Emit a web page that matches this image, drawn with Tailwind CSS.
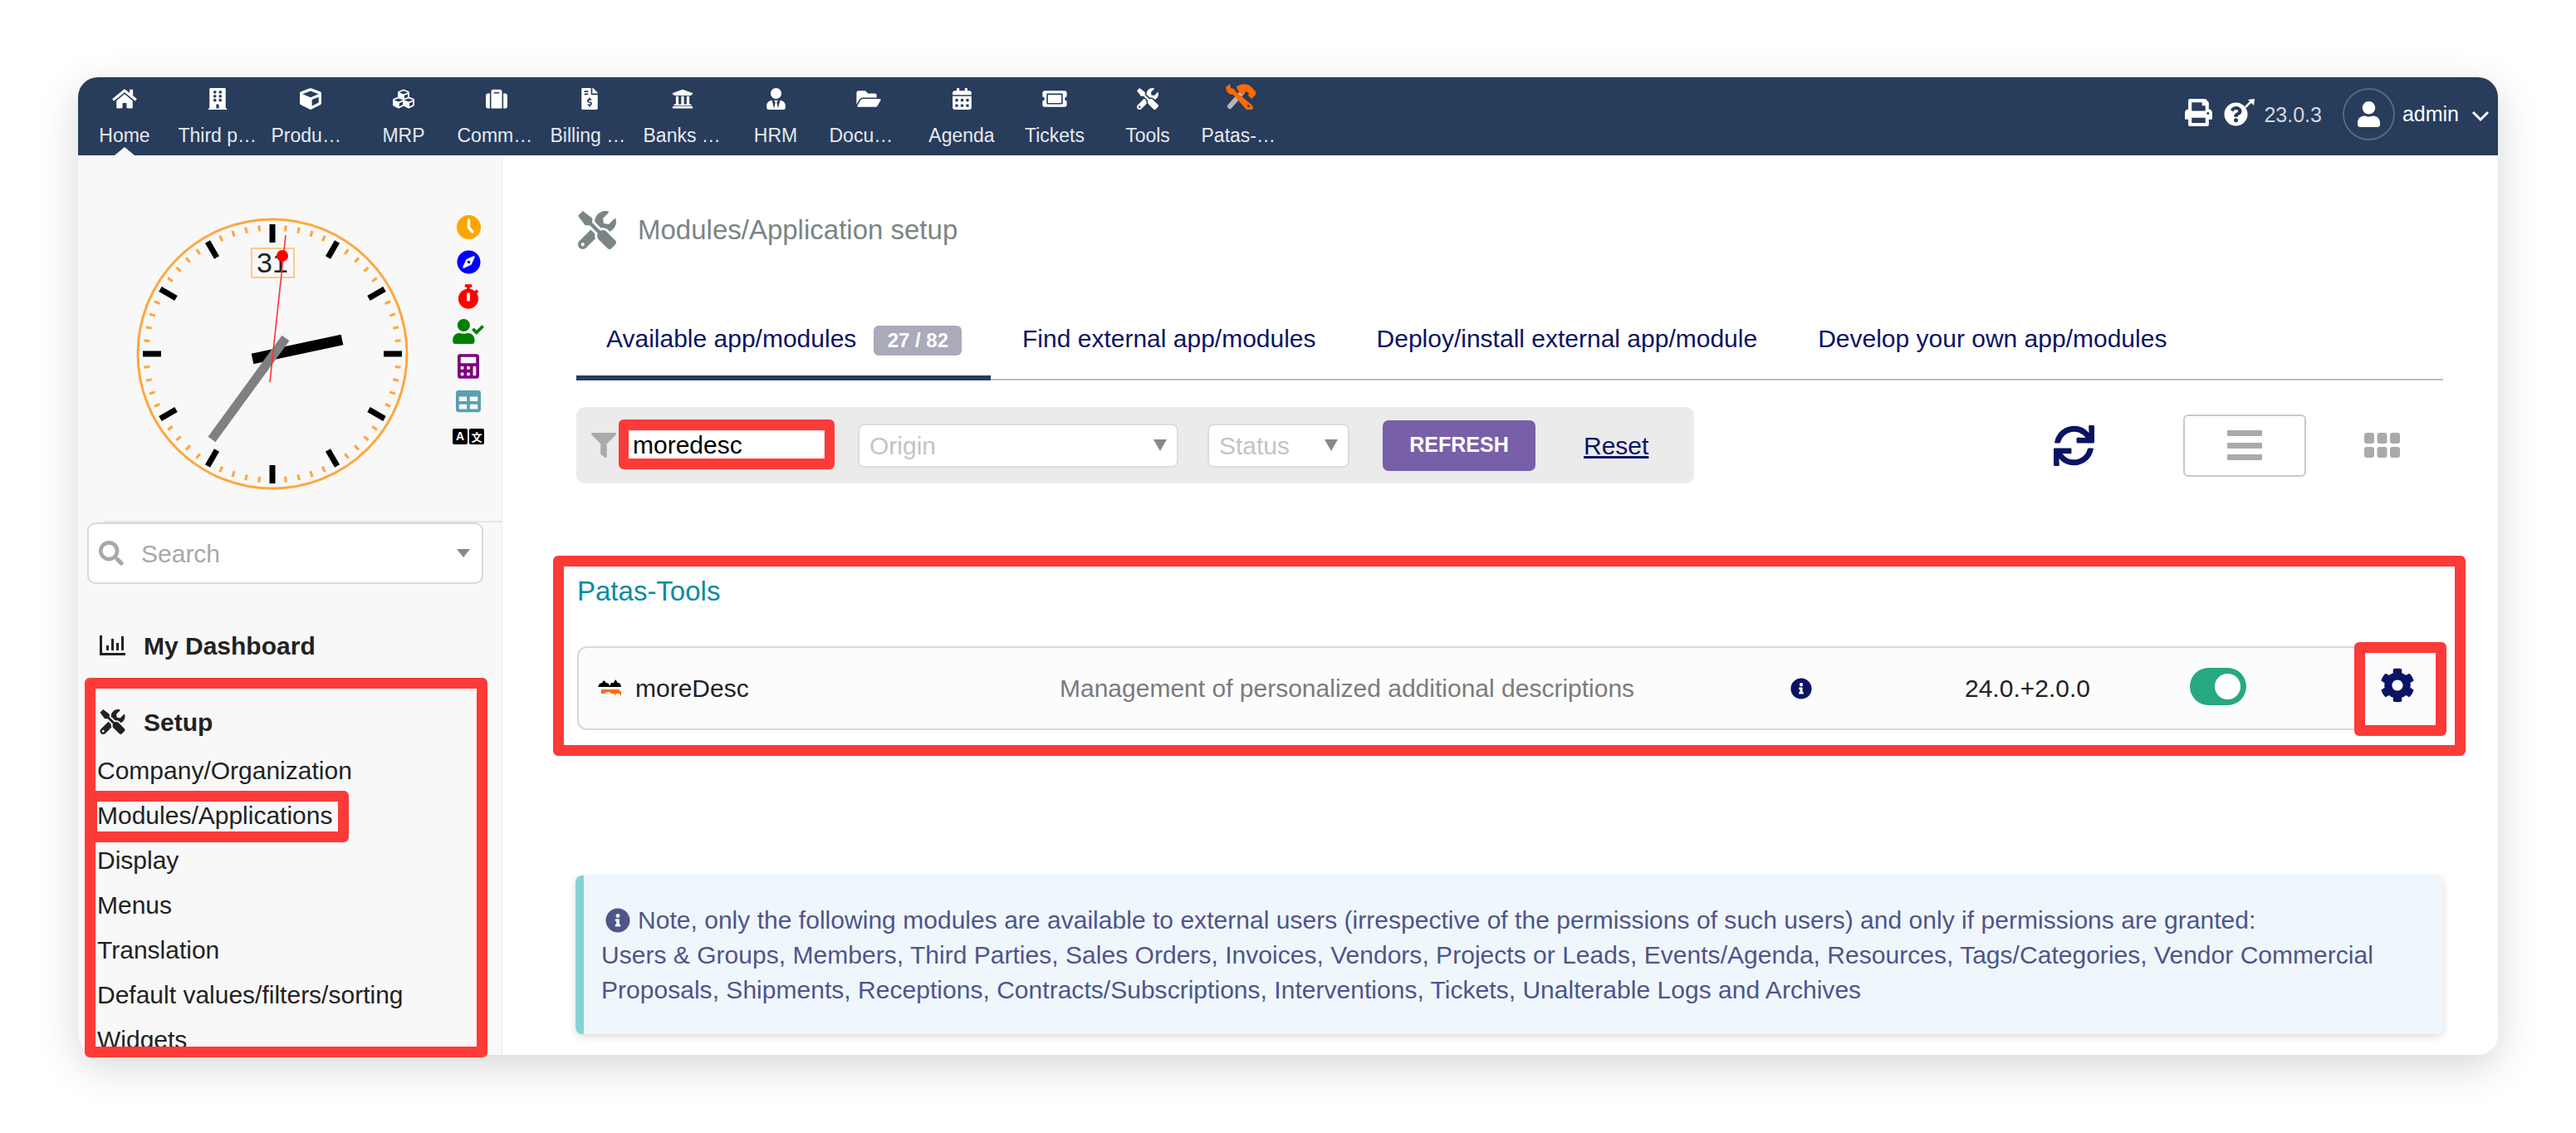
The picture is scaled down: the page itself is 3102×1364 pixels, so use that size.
<!DOCTYPE html>
<html lang="en">
<head>
<meta charset="utf-8">
<title>Modules/Application setup</title>
<script src="https://cdn.jsdelivr.net/npm/@tailwindcss/browser@4"></script>
</head>
<body class="bg-white">
<div class="relative w-[3102px] h-[1364px] overflow-hidden pt-[93px] pl-[94px] font-['Liberation_Sans',Arial,sans-serif] text-[30px] text-[#222]">

  <!-- window -->
  <div class="w-[2914px] h-[1177px] rounded-[24px] overflow-hidden bg-white shadow-[0_14px_50px_rgba(0,0,0,0.16)] flex flex-col">

    <!-- top bar -->
    <header class="h-[94px] shrink-0 bg-[#283c5c] flex text-[#e6e9ef] text-[23px]">
      <nav class="flex">
        <a class="relative w-[112px] flex flex-col items-center pt-[13px]">
          <svg class="h-[26px] w-[30px]" viewBox="0 0 576 512" fill="#fff"><path d="M280.37 148.26L96 300.11V464a16 16 0 0 0 16 16l112.06-.29a16 16 0 0 0 15.92-16V368a16 16 0 0 1 16-16h64a16 16 0 0 1 16 16v95.64a16 16 0 0 0 16 16.05L464 480a16 16 0 0 0 16-16V300L295.67 148.26a12.19 12.19 0 0 0-15.3 0zM571.6 251.47L488 182.56V44.05a12 12 0 0 0-12-12h-56a12 12 0 0 0-12 12v72.61L318.47 43a48 48 0 0 0-61 0L4.34 251.47a12 12 0 0 0-1.6 16.9l25.5 31A12 12 0 0 0 45.15 301l235.22-193.74a12.19 12.19 0 0 1 15.3 0L530.9 301a12 12 0 0 0 16.9-1.6l25.5-31a12 12 0 0 0-1.7-16.93z"/></svg>
          <span class="mt-[17px] w-[95px] truncate text-center leading-[28px]">Home</span>
          <span class="absolute bottom-0 left-[44px] w-0 h-0 border-x-[12px] border-x-transparent border-b-[10px] border-b-[#f8f8f8]"></span>
        </a>
        <a class="w-[112px] flex flex-col items-center pt-[13px]">
          <svg class="h-[26px] w-[24px]" viewBox="0 0 448 512" fill="#fff"><path d="M436 480h-20V24c0-13.255-10.745-24-24-24H56C42.745 0 32 10.745 32 24v456H12c-6.627 0-12 5.373-12 12v20h448v-20c0-6.627-5.373-12-12-12zM128 76c0-6.627 5.373-12 12-12h40c6.627 0 12 5.373 12 12v40c0 6.627-5.373 12-12 12h-40c-6.627 0-12-5.373-12-12V76zm0 96c0-6.627 5.373-12 12-12h40c6.627 0 12 5.373 12 12v40c0 6.627-5.373 12-12 12h-40c-6.627 0-12-5.373-12-12v-40zm52 148h-40c-6.627 0-12-5.373-12-12v-40c0-6.627 5.373-12 12-12h40c6.627 0 12 5.373 12 12v40c0 6.627-5.373 12-12 12zm76 160h-64v-84c0-6.627 5.373-12 12-12h40c6.627 0 12 5.373 12 12v84zm64-172c0 6.627-5.373 12-12 12h-40c-6.627 0-12-5.373-12-12v-40c0-6.627 5.373-12 12-12h40c6.627 0 12 5.373 12 12v40zm0-96c0 6.627-5.373 12-12 12h-40c-6.627 0-12-5.373-12-12v-40c0-6.627 5.373-12 12-12h40c6.627 0 12 5.373 12 12v40zm0-96c0 6.627-5.373 12-12 12h-40c-6.627 0-12-5.373-12-12V76c0-6.627 5.373-12 12-12h40c6.627 0 12 5.373 12 12v40z"/></svg>
          <span class="mt-[17px] w-[95px] truncate text-center leading-[28px]">Third parties</span>
        </a>
        <a class="w-[112px] flex flex-col items-center pt-[13px]">
          <svg class="h-[26px] w-[26px]" viewBox="0 0 512 512" fill="#fff"><path d="M239.1 6.3l-208 78c-18.7 7-31.1 25-31.1 45v225.1c0 18.2 10.3 34.8 26.5 42.9l208 104c13.5 6.8 29.4 6.8 42.9 0l208-104c16.3-8.1 26.5-24.8 26.5-42.9V129.3c0-20-12.4-37.9-31.1-44.9l-208-78C262 2.2 250 2.2 239.1 6.3zM256 68.4l192 72v1.1l-192 78-192-78v-1.1l192-72zm32 356V275.5l160-65v133.9l-160 80z"/></svg>
          <span class="mt-[17px] w-[95px] truncate text-center leading-[28px]">Products | Services</span>
        </a>
        <a class="w-[112px] flex flex-col items-center pt-[13px]">
          <svg class="h-[26px] w-[26px]" viewBox="0 0 512 512" fill="#fff"><path d="M488.6 250.2L392 214V105.5c0-15-9.3-28.4-23.4-33.7l-100-37.5c-8.1-3.1-17.1-3.1-25.3 0l-100 37.5c-14.1 5.3-23.4 18.7-23.4 33.7V214l-96.6 36.2C9.3 255.5 0 268.9 0 283.9V394c0 13.6 7.7 26.1 19.9 32.2l100 50c10.1 5.1 22.1 5.1 32.2 0l103.9-52 103.9 52c10.1 5.1 22.1 5.1 32.2 0l100-50c12.2-6.1 19.9-18.6 19.9-32.2V283.9c0-15-9.3-28.4-23.4-33.7zM358 214.8l-85 31.9v-68.2l85-37v73.3zM154 104.1l102-38.2 102 38.2v.6l-102 41.4-102-41.4v-.6zm84 291.1l-85 42.5v-79.1l85-38.8v75.4zm0-112l-102 41.4-102-41.4v-.6l102-38.2 102 38.2v.6zm240 112l-85 42.5v-79.1l85-38.8v75.4zm0-112l-102 41.4-102-41.4v-.6l102-38.2 102 38.2v.6z"/></svg>
          <span class="mt-[17px] w-[95px] truncate text-center leading-[28px]">MRP</span>
        </a>
        <a class="w-[112px] flex flex-col items-center pt-[13px]">
          <svg class="h-[26px] w-[26px]" viewBox="0 0 512 512" fill="#fff"><path d="M128 480h256V80c0-26.5-21.5-48-48-48H176c-26.5 0-48 21.5-48 48v400zm64-384h128v32H192V96zm320 80v256c0 26.5-21.5 48-48 48h-48V128h48c26.5 0 48 21.5 48 48zM96 480H48c-26.5 0-48-21.5-48-48V176c0-26.5 21.5-48 48-48h48v352z"/></svg>
          <span class="mt-[17px] w-[95px] truncate text-center leading-[28px]">Commerce</span>
        </a>
        <a class="w-[112px] flex flex-col items-center pt-[13px]">
          <svg class="h-[26px] w-[20px]" viewBox="0 0 384 512" fill="#fff"><path d="M377 105L279.1 7c-4.5-4.5-10.6-7-17-7H256v128h128v-6.1c0-6.3-2.5-12.4-7-16.9zm-153 31V0H24C10.7 0 0 10.7 0 24v464c0 13.3 10.7 24 24 24h336c13.3 0 24-10.7 24-24V160H248c-13.2 0-24-10.8-24-24zM64 72c0-4.42 3.58-8 8-8h80c4.42 0 8 3.58 8 8v16c0 4.42-3.58 8-8 8H72c-4.42 0-8-3.58-8-8V72zm0 80v-16c0-4.42 3.58-8 8-8h80c4.42 0 8 3.58 8 8v16c0 4.42-3.58 8-8 8H72c-4.42 0-8-3.58-8-8zm144 263.88V440c0 4.42-3.58 8-8 8h-16c-4.42 0-8-3.58-8-8v-24.29c-11.29-.58-22.27-4.52-31.37-11.35-3.9-2.93-4.1-8.77-.57-12.14l11.75-11.21c2.77-2.64 6.89-2.76 10.13-.73 3.87 2.42 8.26 3.72 12.82 3.72h28.11c6.5 0 11.8-5.92 11.8-13.19 0-5.95-3.61-11.19-8.77-12.73l-45-13.5c-18.59-5.58-31.58-23.42-31.58-43.39 0-24.52 19.05-44.44 42.67-45.07V232c0-4.42 3.58-8 8-8h16c4.42 0 8 3.58 8 8v24.29c11.29.58 22.27 4.51 31.37 11.35 3.9 2.93 4.1 8.77.57 12.14l-11.75 11.21c-2.77 2.64-6.89 2.76-10.13.73-3.87-2.43-8.26-3.72-12.82-3.72h-28.11c-6.5 0-11.8 5.92-11.8 13.19 0 5.95 3.61 11.19 8.77 12.73l45 13.5c18.59 5.58 31.58 23.42 31.58 43.39 0 24.53-19.05 44.44-42.67 45.07z"/></svg>
          <span class="mt-[17px] w-[95px] truncate text-center leading-[28px]">Billing | Payment</span>
        </a>
        <a class="w-[112px] flex flex-col items-center pt-[13px]">
          <svg class="h-[26px] w-[26px]" viewBox="0 0 512 512" fill="#fff"><path d="M496 128v16a8 8 0 0 1-8 8h-24v12c0 6.627-5.373 12-12 12H60c-6.627 0-12-5.373-12-12v-12H24a8 8 0 0 1-8-8v-16a8 8 0 0 1 4.941-7.392l232-88a7.996 7.996 0 0 1 6.118 0l232 88A8 8 0 0 1 496 128zm-24 304H40c-13.255 0-24 10.745-24 24v16a8 8 0 0 0 8 8h464a8 8 0 0 0 8-8v-16c0-13.255-10.745-24-24-24zM96 192v192H60c-6.627 0-12 5.373-12 12v20h416v-20c0-6.627-5.373-12-12-12h-36V192h-64v192h-64V192h-64v192h-64V192H96z"/></svg>
          <span class="mt-[17px] w-[95px] truncate text-center leading-[28px]">Banks | Cash</span>
        </a>
        <a class="w-[112px] flex flex-col items-center pt-[13px]">
          <svg class="h-[26px] w-[23px]" viewBox="0 0 448 512" fill="#fff"><path d="M224 256c70.7 0 128-57.3 128-128S294.7 0 224 0 96 57.3 96 128s57.3 128 128 128zm95.8 32.6L272 480l-32-136 32-56h-96l32 56-32 136-47.8-191.4C56.9 292 0 350.3 0 422.4V464c0 26.5 21.5 48 48 48h352c26.5 0 48-21.5 48-48v-41.6c0-72.1-56.9-130.4-128.2-133.8z"/></svg>
          <span class="mt-[17px] w-[95px] truncate text-center leading-[28px]">HRM</span>
        </a>
        <a class="w-[112px] flex flex-col items-center pt-[13px]">
          <svg class="h-[26px] w-[30px]" viewBox="0 0 576 512" fill="#fff"><path d="M572.694 292.093L500.27 416.248A63.997 63.997 0 0 1 444.989 448H45.025c-18.523 0-30.064-20.093-20.731-36.093l72.424-124.155A64 64 0 0 1 152 256h399.964c18.523 0 30.064 20.093 20.73 36.093zM152 224h328v-48c0-26.51-21.49-48-48-48H272l-64-64H48C21.49 64 0 85.49 0 112v278.046l69.077-118.418C86.214 242.25 117.989 224 152 224z"/></svg>
          <span class="mt-[17px] w-[95px] truncate text-center leading-[28px]">Documents</span>
        </a>
        <a class="w-[112px] flex flex-col items-center pt-[13px]">
          <svg class="h-[26px] w-[23px]" viewBox="0 0 448 512" fill="#fff"><path d="M0 464c0 26.5 21.5 48 48 48h352c26.5 0 48-21.5 48-48V192H0v272zm320-196c0-6.6 5.4-12 12-12h40c6.6 0 12 5.4 12 12v40c0 6.6-5.4 12-12 12h-40c-6.6 0-12-5.4-12-12v-40zm0 128c0-6.6 5.4-12 12-12h40c6.6 0 12 5.4 12 12v40c0 6.6-5.4 12-12 12h-40c-6.6 0-12-5.4-12-12v-40zM192 268c0-6.6 5.4-12 12-12h40c6.6 0 12 5.4 12 12v40c0 6.6-5.4 12-12 12h-40c-6.6 0-12-5.4-12-12v-40zm0 128c0-6.6 5.4-12 12-12h40c6.6 0 12 5.4 12 12v40c0 6.6-5.4 12-12 12h-40c-6.6 0-12-5.4-12-12v-40zM64 268c0-6.6 5.4-12 12-12h40c6.6 0 12 5.4 12 12v40c0 6.6-5.4 12-12 12H76c-6.6 0-12-5.4-12-12v-40zm0 128c0-6.6 5.4-12 12-12h40c6.6 0 12 5.4 12 12v40c0 6.6-5.4 12-12 12H76c-6.6 0-12-5.4-12-12v-40zM400 64h-48V16c0-8.8-7.2-16-16-16h-32c-8.8 0-16 7.2-16 16v48H160V16c0-8.8-7.2-16-16-16h-32c-8.8 0-16 7.2-16 16v48H48C21.5 64 0 85.5 0 112v48h448v-48c0-26.5-21.5-48-48-48z"/></svg>
          <span class="mt-[17px] w-[95px] truncate text-center leading-[28px]">Agenda</span>
        </a>
        <a class="w-[112px] flex flex-col items-center pt-[13px]">
          <svg class="h-[26px] w-[30px]" viewBox="0 0 576 512" fill="#fff"><path d="M128 160h320v192H128V160zm400 96c0 26.51 21.49 48 48 48v96c0 26.51-21.49 48-48 48H48c-26.51 0-48-21.49-48-48v-96c26.51 0 48-21.49 48-48s-21.49-48-48-48v-96c0-26.51 21.49-48 48-48h480c26.51 0 48 21.49 48 48v96c-26.51 0-48 21.49-48 48zm-48-104c0-13.255-10.745-24-24-24H120c-13.255 0-24 10.745-24 24v208c0 13.255 10.745 24 24 24h336c13.255 0 24-10.745 24-24V152z"/></svg>
          <span class="mt-[17px] w-[95px] truncate text-center leading-[28px]">Tickets</span>
        </a>
        <a class="w-[112px] flex flex-col items-center pt-[13px]">
          <svg class="h-[26px] w-[26px]" viewBox="0 0 512 512" fill="#fff"><path d="M501.1 395.7L384 278.6c-23.1-23.1-57.6-27.6-85.4-13.9L192 158.1V96L64 0 0 64l96 128h62.1l106.6 106.6c-13.6 27.8-9.2 62.3 13.9 85.4l117.1 117.1c14.6 14.6 38.2 14.6 52.7 0l52.7-52.7c14.5-14.6 14.5-38.2 0-52.7zM331.7 225c28.3 0 54.9 11 74.9 31l19.4 19.4c15.8-6.9 30.8-16.5 43.8-29.5 37.1-37.1 49.7-89.3 37.9-136.7-2.2-9-13.5-12.1-20.1-5.5l-74.4 74.4-67.9-11.3L334 98.9l74.4-74.4c6.6-6.6 3.4-17.9-5.7-20.2-47.4-11.7-99.6.9-136.6 37.9-28.5 28.5-41.9 66.1-41.2 103.6l82.1 82.1c8.1-1.9 16.5-2.9 24.7-2.9zm-103.9 82l-56.7-56.7L18.7 402.8c-25 25-25 65.5 0 90.5s65.5 25 90.5 0l123.6-123.6c-7.6-19.9-9.9-41.6-5-62.7zM64 472c-13.2 0-24-10.8-24-24 0-13.3 10.7-24 24-24s24 10.7 24 24c0 13.2-10.7 24-24 24z"/></svg>
          <span class="mt-[17px] w-[95px] truncate text-center leading-[28px]">Tools</span>
        </a>
        <a class="w-[112px] flex flex-col items-center pt-[6px]">
          <svg class="h-[33px] w-[38px]" viewBox="0 0 38 33">
            <path d="M6 29 L21 12" stroke="#b5b5b5" stroke-width="6" stroke-linecap="round"/>
            <path d="M14 5 Q22 0 30 4 L37 11 L37 15 L32 20 L28 16 L29 13 L25 11 L21 15 L15 9 Z" fill="#ff6a00"/>
            <path d="M1 6 L6 2 L7 7 L11 8 L14 12 L32 27 A4.5 4.5 0 1 1 25 32 L10 15 Q2 15 1 6 Z" fill="#ff6a00"/>
            <circle cx="28.5" cy="28.5" r="1.6" fill="#283c5c"/>
          </svg>
          <span class="mt-[17px] w-[95px] truncate text-center leading-[28px]">Patas-Tools</span>
        </a>
      </nav>

      <div class="ml-auto flex items-start pr-[10px] pt-[13px]">
        <svg class="mt-[13px] w-[33px] h-[33px]" viewBox="0 0 512 512" fill="#fff"><path d="M448 192V77.25c0-8.49-3.37-16.62-9.37-22.63L393.37 9.37c-6-6-14.14-9.37-22.63-9.37H96C78.33 0 64 14.33 64 32v160c-35.35 0-64 28.65-64 64v112c0 8.84 7.16 16 16 16h48v96c0 17.67 14.33 32 32 32h320c17.67 0 32-14.33 32-32v-96h48c8.84 0 16-7.16 16-16V256c0-35.35-28.65-64-64-64zm-64 256H128v-96h256v96zm0-224H128V64h192v48c0 8.84 7.16 16 16 16h48v96zm48 72c-13.25 0-24-10.75-24-24 0-13.26 10.75-24 24-24s24 10.74 24 24c0 13.25-10.75 24-24 24z"/></svg>
        <svg class="mt-[13px] ml-[14px] w-[37px] h-[33px]" viewBox="0 0 37 33" fill="#fff">
          <svg x="0" y="4" width="29" height="29" viewBox="0 0 512 512"><path d="M504 256c0 136.997-111.043 248-248 248S8 392.997 8 256C8 119.083 119.043 8 256 8s248 111.083 248 248zM262.655 90c-54.497 0-89.255 22.957-116.549 63.758-3.536 5.286-2.353 12.415 2.715 16.258l34.699 26.31c5.205 3.947 12.621 3.008 16.665-2.122 17.864-22.658 30.113-35.797 57.303-35.797 20.429 0 45.698 13.148 45.698 32.958 0 14.976-12.363 22.667-32.534 33.976C247.128 238.528 216 254.941 216 296v4c0 6.627 5.373 12 12 12h56c6.627 0 12-5.373 12-12v-1.333c0-28.462 83.186-29.647 83.186-106.667 0-58.002-60.165-102-116.531-102zM256 338c-25.365 0-46 20.635-46 46 0 25.364 20.635 46 46 46s46-20.636 46-46c0-25.365-20.635-46-46-46z"/></svg>
          <path d="M26 10 L33 3" stroke="#fff" stroke-width="2.5"/><path d="M29 1 L37 0 L36 8 Z"/>
        </svg>
        <span class="ml-[11px] mt-[18px] text-[25px] leading-[28px] text-[#d5d6d8]">23.0.3</span>
        <span class="ml-[25px] w-[63px] h-[63px] rounded-full border-2 border-[#56677f] flex items-center justify-center">
          <svg class="w-[27px] h-[31px]" viewBox="0 0 448 512" fill="#fff"><path d="M224 256c70.7 0 128-57.3 128-128S294.7 0 224 0 96 57.3 96 128s57.3 128 128 128zm89.6 32h-16.7c-22.2 10.2-46.9 16-72.9 16s-50.6-5.8-72.9-16h-16.7C60.2 288 0 348.2 0 422.4V464c0 26.5 21.5 48 48 48h352c26.5 0 48-21.5 48-48v-41.6c0-74.2-60.2-134.4-134.4-134.4z"/></svg>
        </span>
        <span class="ml-[9px] mt-[17px] text-[25px] leading-[28px] text-white">admin</span>
        <svg class="ml-[15px] mt-[27px] w-[22px] h-[14px]" viewBox="0 0 22 14" fill="none" stroke="#fff" stroke-width="3"><path d="M2 2 L11 11 L20 2"/></svg>
      </div>
    </header>

    <div class="flex flex-1 min-h-0">
      <!-- sidebar -->
      <aside class="w-[511px] shrink-0 bg-[#f8f8f8] border-r border-[#eeeeee] overflow-hidden">
        <div class="h-[440px] flex items-start">
          <svg class="ml-[69px] mt-[74px] w-[330px] h-[330px]" viewBox="-165 -165 330 330">
            <circle r="162" fill="none" stroke="#ffa63e" stroke-width="3"/>
            <circle r="152" fill="none" stroke="#ffa63e" stroke-width="7" pathLength="60" stroke-dasharray="0.2 0.8" stroke-dashoffset="0.1"/>
            <g stroke="#000" stroke-width="7">
              <path d="M0 -156V-134M0 156V134M-156 0H-134M156 0H134"/>
              <path d="M78 -135L67 -116M135 -78L116 -67M135 78L116 67M78 135L67 116M-78 135L-67 116M-135 78L-116 67M-135 -78L-116 -67M-78 -135L-67 -116"/>
            </g>
            <rect x="-25" y="-127" width="51" height="35" fill="none" stroke="#ffc98a" stroke-width="2"/>
            <text x="0" y="-98" text-anchor="middle" font-size="34" fill="#222" font-family="Liberation Sans">31</text>
            <path d="M-24 6 L84 -17" stroke="#000" stroke-width="13"/>
            <path d="M-73 103 L16 -19" stroke="#808080" stroke-width="11"/>
            <path d="M-3 34 L16 -143" stroke="#ff3030" stroke-width="1.6"/>
            <circle cx="12" cy="-118" r="7" fill="#ff0000"/>
          </svg>
          <div class="ml-[51px] mt-[65px] w-[40px] flex flex-col items-center">
            <span class="h-[42px] flex items-center"><svg class="w-[29px] h-[29px]" viewBox="0 0 29 29"><circle cx="14.5" cy="14.5" r="14.5" fill="#ffa500"/><path d="M14.5 6V15L19 20" fill="none" stroke="#fff" stroke-width="3.4" stroke-linecap="round"/></svg></span>
            <span class="h-[42px] flex items-center"><svg class="w-[29px] h-[29px]" viewBox="0 0 496 512"><circle cx="248" cy="256" r="248" fill="#fff"/><path fill="#0000ff" d="M225.38 233.37c-12.5 12.5-12.5 32.76 0 45.25 12.49 12.5 32.76 12.5 45.25 0 12.5-12.5 12.5-32.76 0-45.25-12.5-12.49-32.76-12.49-45.25 0zM248 8C111.03 8 0 119.03 0 256s111.03 248 248 248 248-111.03 248-248S384.97 8 248 8zm126.14 148.05L308.17 300.4a31.938 31.938 0 0 1-15.77 15.77l-144.34 65.97c-16.65 7.61-33.81-9.55-26.2-26.2l65.98-144.35a31.938 31.938 0 0 1 15.77-15.77l144.34-65.97c16.65-7.6 33.8 9.55 26.19 26.2z"/></svg></span>
            <span class="h-[42px] flex items-center"><svg class="w-[26px] h-[30px]" viewBox="0 0 448 512" fill="#ff0000"><path d="M432 304c0 114.9-93.1 208-208 208S16 418.9 16 304c0-104 76.3-190.2 176-205.5V64h-28c-6.6 0-12-5.4-12-12V12c0-6.6 5.4-12 12-12h120c6.6 0 12 5.4 12 12v40c0 6.6-5.4 12-12 12h-28v34.5c37.5 5.8 71.7 21.6 99.7 44.6l27.5-27.5c4.7-4.7 12.3-4.7 17 0l28.3 28.3c4.7 4.7 4.7 12.3 0 17l-29.4 29.4-.6.6C419.7 223.3 432 262.2 432 304zm-176 36V188.5c0-6.6-5.4-12-12-12h-40c-6.6 0-12 5.4-12 12V340c0 6.6 5.4 12 12 12h40c6.6 0 12-5.4 12-12z"/></svg></span>
            <span class="h-[42px] flex items-center"><svg class="w-[38px] h-[30px]" viewBox="0 0 640 512" fill="#008000"><path d="M224 256c70.7 0 128-57.3 128-128S294.7 0 224 0 96 57.3 96 128s57.3 128 128 128zm89.6 32h-16.7c-22.2 10.2-46.9 16-72.9 16s-50.6-5.8-72.9-16h-16.7C60.2 288 0 348.2 0 422.4V464c0 26.5 21.5 48 48 48h352c26.5 0 48-21.5 48-48v-41.6c0-74.2-60.2-134.4-134.4-134.4zm323-128.4l-27.8-28.1c-4.6-4.7-12.1-4.7-16.8-.1l-104.8 104-45.5-45.8c-4.6-4.7-12.1-4.7-16.8-.1l-28.1 27.9c-4.7 4.6-4.7 12.1-.1 16.8l81.7 82.3c4.6 4.7 12.1 4.7 16.8.1l141.3-140.2c4.6-4.7 4.7-12.2.1-16.8z"/></svg></span>
            <span class="h-[42px] flex items-center"><svg class="w-[26px] h-[30px]" viewBox="0 0 448 512" fill="#800080"><path d="M400 0H48C22.4 0 0 22.4 0 48v416c0 25.6 22.4 48 48 48h352c25.6 0 48-22.4 48-48V48c0-25.6-22.4-48-48-48zM128 435.2c0 6.4-6.4 12.8-12.8 12.8H76.8c-6.4 0-12.8-6.4-12.8-12.8v-38.4c0-6.4 6.4-12.8 12.8-12.8h38.4c6.4 0 12.8 6.4 12.8 12.8v38.4zm0-128c0 6.4-6.4 12.8-12.8 12.8H76.8c-6.4 0-12.8-6.4-12.8-12.8v-38.4c0-6.4 6.4-12.8 12.8-12.8h38.4c6.4 0 12.8 6.4 12.8 12.8v38.4zm128 128c0 6.4-6.4 12.8-12.8 12.8h-38.4c-6.4 0-12.8-6.4-12.8-12.8v-38.4c0-6.4 6.4-12.8 12.8-12.8h38.4c6.4 0 12.8 6.4 12.8 12.8v38.4zm0-128c0 6.4-6.4 12.8-12.8 12.8h-38.4c-6.4 0-12.8-6.4-12.8-12.8v-38.4c0-6.4 6.4-12.8 12.8-12.8h38.4c6.4 0 12.8 6.4 12.8 12.8v38.4zm128 128c0 6.4-6.4 12.8-12.8 12.8h-38.4c-6.4 0-12.8-6.4-12.8-12.8V268.8c0-6.4 6.4-12.8 12.8-12.8h38.4c6.4 0 12.8 6.4 12.8 12.8v166.4zm0-256c0 6.4-6.4 12.8-12.8 12.8H76.8c-6.4 0-12.8-6.4-12.8-12.8V76.8C64 70.4 70.4 64 76.8 64h294.4c6.4 0 12.8 6.4 12.8 12.8v102.4z"/></svg></span>
            <span class="h-[42px] flex items-center"><svg class="w-[30px] h-[30px]" viewBox="0 0 512 512" fill="#5a9fb2"><path d="M464 32H48C21.49 32 0 53.49 0 80v352c0 26.51 21.49 48 48 48h416c26.51 0 48-21.49 48-48V80c0-26.51-21.49-48-48-48zM224 416H64v-96h160v96zm0-160H64v-96h160v96zm224 160H288v-96h160v96zm0-160H288v-96h160v96z"/></svg></span>
            <span class="h-[42px] flex items-center gap-[2px]">
              <span class="w-[18px] h-[19px] bg-black rounded-[2px] flex items-center justify-center text-white text-[14px] font-bold leading-none">A</span>
              <span class="w-[18px] h-[19px] bg-black rounded-[2px] flex items-center justify-center text-white text-[13px] font-bold leading-none font-['Noto_Sans_CJK_SC',sans-serif]">文</span>
            </span>
          </div>
        </div>
        <div class="ml-[30px] h-[2px] bg-[#e6e6e6]"></div>
        <div class="ml-[11px] w-[477px] h-[74px] bg-white border-2 border-[#d8d8d8] rounded-[10px] flex items-center pl-[12px] pr-[14px]">
          <svg class="w-[30px] h-[30px]" viewBox="0 0 512 512" fill="#a8a8a8"><path d="M505 442.7L405.3 343c-4.5-4.5-10.6-7-17-7H372c27.6-35.3 44-79.7 44-128C416 93.1 322.9 0 208 0S0 93.1 0 208s93.1 208 208 208c48.3 0 92.7-16.4 128-44v16.3c0 6.4 2.5 12.5 7 17l99.7 99.7c9.4 9.4 24.6 9.4 33.9 0l28.3-28.3c9.4-9.4 9.4-24.6.1-34zM208 336c-70.7 0-128-57.2-128-128 0-70.7 57.2-128 128-128 70.7 0 128 57.2 128 128 0 70.7-57.2 128-128 128z"/></svg>
          <span class="ml-[21px] text-[#a8a8a8]">Search</span>
          <span class="ml-auto w-0 h-0 border-x-[8px] border-x-transparent border-t-[10px] border-t-[#888]"></span>
        </div>
        <div class="mt-[52px] ml-[26px] flex items-center h-[44px] font-bold">
          <svg class="w-[31px] h-[24px]" viewBox="0 0 31 24" fill="#222"><path d="M0 0H3V21H31V24H0Z"/><rect x="8" y="12" width="3" height="6"/><rect x="14" y="4" width="3" height="14"/><rect x="20" y="9" width="3" height="9"/><rect x="26" y="1" width="3" height="17"/></svg>
          <span class="ml-[22px]">My Dashboard</span>
        </div>
        <div class="mt-[48px] ml-[26px] flex items-center h-[44px] font-bold">
          <svg class="w-[31px] h-[30px]" viewBox="0 0 512 512" fill="#222"><path d="M501.1 395.7L384 278.6c-23.1-23.1-57.6-27.6-85.4-13.9L192 158.1V96L64 0 0 64l96 128h62.1l106.6 106.6c-13.6 27.8-9.2 62.3 13.9 85.4l117.1 117.1c14.6 14.6 38.2 14.6 52.7 0l52.7-52.7c14.5-14.6 14.5-38.2 0-52.7zM331.7 225c28.3 0 54.9 11 74.9 31l19.4 19.4c15.8-6.9 30.8-16.5 43.8-29.5 37.1-37.1 49.7-89.3 37.9-136.7-2.2-9-13.5-12.1-20.1-5.5l-74.4 74.4-67.9-11.3L334 98.9l74.4-74.4c6.6-6.6 3.4-17.9-5.7-20.2-47.4-11.7-99.6.9-136.6 37.9-28.5 28.5-41.9 66.1-41.2 103.6l82.1 82.1c8.1-1.9 16.5-2.9 24.7-2.9zm-103.9 82l-56.7-56.7L18.7 402.8c-25 25-25 65.5 0 90.5s65.5 25 90.5 0l123.6-123.6c-7.6-19.9-9.9-41.6-5-62.7zM64 472c-13.2 0-24-10.8-24-24 0-13.3 10.7-24 24-24s24 10.7 24 24c0 13.2-10.7 24-24 24z"/></svg>
          <span class="ml-[22px]">Setup</span>
        </div>
        <ul class="mt-[10px] ml-[23px] flex flex-col">
          <li class="h-[54px] leading-[54px]">Company/Organization</li>
          <li class="h-[54px] leading-[54px]">Modules/Applications</li>
          <li class="h-[54px] leading-[54px]">Display</li>
          <li class="h-[54px] leading-[54px]">Menus</li>
          <li class="h-[54px] leading-[54px]">Translation</li>
          <li class="h-[54px] leading-[54px]">Default values/filters/sorting</li>
          <li class="h-[54px] leading-[54px]">Widgets</li>
        </ul>
      </aside>

      <!-- main -->
      <main class="flex-1 min-w-0 pl-[89px] pr-[66px] pt-[60px]">
        <div class="flex items-center h-[60px] text-[#7b8585] text-[33px]">
          <svg class="ml-[2px] w-[46px] h-[46px]" viewBox="0 0 512 512" fill="#7b8585"><path d="M501.1 395.7L384 278.6c-23.1-23.1-57.6-27.6-85.4-13.9L192 158.1V96L64 0 0 64l96 128h62.1l106.6 106.6c-13.6 27.8-9.2 62.3 13.9 85.4l117.1 117.1c14.6 14.6 38.2 14.6 52.7 0l52.7-52.7c14.5-14.6 14.5-38.2 0-52.7zM331.7 225c28.3 0 54.9 11 74.9 31l19.4 19.4c15.8-6.9 30.8-16.5 43.8-29.5 37.1-37.1 49.7-89.3 37.9-136.7-2.2-9-13.5-12.1-20.1-5.5l-74.4 74.4-67.9-11.3L334 98.9l74.4-74.4c6.6-6.6 3.4-17.9-5.7-20.2-47.4-11.7-99.6.9-136.6 37.9-28.5 28.5-41.9 66.1-41.2 103.6l82.1 82.1c8.1-1.9 16.5-2.9 24.7-2.9zm-103.9 82l-56.7-56.7L18.7 402.8c-25 25-25 65.5 0 90.5s65.5 25 90.5 0l123.6-123.6c-7.6-19.9-9.9-41.6-5-62.7zM64 472c-13.2 0-24-10.8-24-24 0-13.3 10.7-24 24-24s24 10.7 24 24c0 13.2-10.7 24-24 24z"/></svg>
          <span class="ml-[26px]">Modules/Application setup</span>
        </div>

        <!-- tabs -->
        <div class="mt-[63px] h-[88px] border-b-2 border-[#bdbdbd] flex items-start text-[#0a1464]">
          <div class="h-[88px] w-[499px] border-b-[6px] border-[#283c5c] flex items-start pt-[17px] pl-[36px]">
            <span class="leading-[42px]">Available app/modules</span>
            <span class="ml-[21px] mt-[5px] w-[106px] h-[36px] rounded-[6px] bg-[#aaaabb] text-white text-[24px] font-bold leading-[36px] text-center">27 / 82</span>
          </div>
          <span class="ml-[38px] mt-[17px] leading-[42px]">Find external app/modules</span>
          <span class="ml-[73px] mt-[17px] leading-[42px]">Deploy/install external app/module</span>
          <span class="ml-[73px] mt-[17px] leading-[42px]">Develop your own app/modules</span>
        </div>

        <!-- filters -->
        <div class="mt-[32px] flex items-center h-[92px]">
          <div class="w-[1346px] h-[92px] rounded-[10px] bg-[#ebebeb] flex items-center pl-[18px]">
            <svg class="w-[30px] h-[30px]" viewBox="0 0 512 512" fill="#aaaaaa"><path d="M487.976 0H24.028C2.71 0-8.047 25.866 7.058 40.971L192 225.941V432c0 7.831 3.821 15.17 10.237 19.662l80 55.98C298.02 518.69 320 507.493 320 487.98V225.941l184.947-184.97C520.021 25.896 509.338 0 487.976 0z"/></svg>
            <span class="ml-[14px] w-[236px] h-[34px] bg-white pl-[6px] leading-[34px] text-black">moredesc</span>
            <span class="ml-[41px] w-[386px] h-[53px] bg-white border-2 border-[#dddddd] rounded-[8px] flex items-center pl-[12px] pr-[12px] text-[#c4c4c4]">Origin<span class="ml-auto w-0 h-0 border-x-[8px] border-x-transparent border-t-[14px] border-t-[#888]"></span></span>
            <span class="ml-[35px] w-[171px] h-[53px] bg-white border-2 border-[#dddddd] rounded-[8px] flex items-center pl-[12px] pr-[12px] text-[#c4c4c4]">Status<span class="ml-auto w-0 h-0 border-x-[8px] border-x-transparent border-t-[14px] border-t-[#888]"></span></span>
            <span class="ml-[40px] w-[184px] h-[61px] rounded-[7px] bg-[#7860a9] text-white text-[25px] font-bold flex items-center justify-center">REFRESH</span>
            <span class="ml-[58px] text-[#0a1464] underline">Reset</span>
          </div>
          <svg class="ml-[433px] w-[49px] h-[49px]" viewBox="0 0 512 512" fill="#0a1464"><path d="M440.65 12.57l4 82.77A247.16 247.16 0 0 0 255.83 8C134.73 8 33.91 94.92 12.29 209.82A12 12 0 0 0 24.09 224h49.05a12 12 0 0 0 11.67-9.26 175.91 175.91 0 0 1 317-56.94l-101.46-4.86a12 12 0 0 0-12.57 12v47.41a12 12 0 0 0 12 12H500a12 12 0 0 0 12-12V12a12 12 0 0 0-12-12h-47.37a12 12 0 0 0-11.98 12.57zM255.83 432a175.61 175.61 0 0 1-146-77.8l101.8 4.87a12 12 0 0 0 12.57-12v-47.4a12 12 0 0 0-12-12H12a12 12 0 0 0-12 12V500a12 12 0 0 0 12 12h47.35a12 12 0 0 0 12-12.6l-4.15-82.57A247.17 247.17 0 0 0 255.83 504c121.11 0 221.93-86.92 243.55-201.82a12 12 0 0 0-11.8-14.18h-49.05a12 12 0 0 0-11.67 9.26A175.86 175.86 0 0 1 255.83 432z"/></svg>
          <span class="ml-[107px] w-[148px] h-[75px] rounded-[6px] border-2 border-[#c8c8c8] flex items-center justify-center">
            <svg class="w-[42px] h-[36px]" viewBox="0 0 42 36" fill="#aaaaaa"><rect width="42" height="7" rx="1"/><rect y="15" width="42" height="7" rx="1"/><rect y="29" width="42" height="7" rx="1"/></svg>
          </span>
          <svg class="ml-[70px] w-[43px] h-[30px]" viewBox="0 0 43 30" fill="#aaaaaa"><rect width="12" height="13" rx="3"/><rect x="15.5" width="12" height="13" rx="3"/><rect x="31" width="12" height="13" rx="3"/><rect y="17" width="12" height="13" rx="3"/><rect x="15.5" y="17" width="12" height="13" rx="3"/><rect x="31" y="17" width="12" height="13" rx="3"/></svg>
        </div>

        <!-- module group -->
        <div class="mt-[110px] pl-[1px] h-[40px] leading-[40px] text-[33px] text-[#0a8aa3]">Patas-Tools</div>
        <div class="mt-[46px] h-[101px] ml-[1px] flex items-center rounded-l-[12px] border-y-2 border-l-2 border-[#d8d8d8] bg-[#fcfcfc]">
          <span class="w-[579px] shrink-0 flex items-center pl-[23px]">
            <svg class="w-[28px] h-[22px]" viewBox="0 0 28 22"><path d="M0 9 L2 5 L5 4 L7 1 L10 4 L13 5 L14 8 L16 4 L19 4 L21 0 L24 4 L27 5 L28 9Z" fill="#000"/><path d="M4 12H25L28 15V20L26 17H22L20 20V17H16L14 15H10L8 17H4Z" fill="#ff6a00"/></svg>
            <span class="ml-[17px]">moreDesc</span>
          </span>
          <span class="w-[880px] shrink-0 text-[#7b7b7b]">Management of personalized additional descriptions</span>
          <svg class="w-[26px] h-[26px] shrink-0" viewBox="0 0 512 512" fill="#0a1464"><path d="M256 8C119.043 8 8 119.083 8 256c0 136.997 111.043 248 248 248s248-111.003 248-248C504 119.083 392.957 8 256 8zm0 110c23.196 0 42 18.804 42 42s-18.804 42-42 42-42-18.804-42-42 18.804-42 42-42zm56 254c0 6.627-5.373 12-12 12h-88c-6.627 0-12-5.373-12-12v-24c0-6.627 5.373-12 12-12h12v-64h-12c-6.627 0-12-5.373-12-12v-24c0-6.627 5.373-12 12-12h64c6.627 0 12 5.373 12 12v100h12c6.627 0 12 5.373 12 12v24z"/></svg>
          <span class="ml-[184px] w-[271px] shrink-0">24.0.+2.0.0</span>
          <span class="w-[68px] h-[45px] -mt-[5px] shrink-0 rounded-full bg-[#26a982] flex items-center justify-end pr-[7px]"><span class="w-[31px] h-[31px] rounded-full bg-white"></span></span>
          <svg class="ml-[161px] -mt-[8px] w-[42px] h-[44px] shrink-0" viewBox="0 0 512 512" fill="#0a1464"><path d="M487.4 315.7l-42.6-24.6c4.3-23.2 4.3-47 0-70.2l42.6-24.6c4.9-2.8 7.1-8.6 5.5-14-11.1-35.6-30-67.8-54.7-94.6-3.8-4.1-10-5.1-14.8-2.3L380.8 110c-17.9-15.4-38.5-27.3-60.8-35.1V25.8c0-5.6-3.9-10.5-9.4-11.7-36.7-8.2-74.3-7.8-109.2 0-5.5 1.2-9.4 6.1-9.4 11.7V75c-22.2 7.9-42.8 19.8-60.8 35.1L88.7 85.5c-4.9-2.8-11-1.9-14.8 2.3-24.7 26.7-43.6 58.9-54.7 94.6-1.7 5.4.6 11.2 5.5 14L67.3 221c-4.3 23.2-4.3 47 0 70.2l-42.6 24.6c-4.9 2.8-7.1 8.6-5.5 14 11.1 35.6 30 67.8 54.7 94.6 3.8 4.1 10 5.1 14.8 2.3l42.6-24.6c17.9 15.4 38.5 27.3 60.8 35.1v49.2c0 5.6 3.9 10.5 9.4 11.7 36.7 8.2 74.3 7.8 109.2 0 5.5-1.2 9.4-6.1 9.4-11.7v-49.2c22.2-7.9 42.8-19.8 60.8-35.1l42.6 24.6c4.9 2.8 11 1.9 14.8-2.3 24.7-26.7 43.6-58.9 54.7-94.6 1.5-5.5-.7-11.3-5.6-14.1zM256 336c-44.1 0-80-35.9-80-80s35.9-80 80-80 80 35.9 80 80-35.9 80-80 80z"/></svg>
        </div>

        <!-- note -->
        <div class="mt-[175px] h-[191px] -ml-[1px] flex items-center rounded-[8px] border-l-[10px] border-[#85d2d4] bg-[#eff7fd] shadow-[0_3px_10px_rgba(0,0,0,0.14)] pl-[21px] text-[#50548a] leading-[42px] tracking-[0.027px]">
          <p>
            <svg class="inline-block ml-[5px] mr-[9px] -mt-[4px] w-[30px] h-[30px]" viewBox="0 0 512 512" fill="#50548a"><path d="M256 8C119.043 8 8 119.083 8 256c0 136.997 111.043 248 248 248s248-111.003 248-248C504 119.083 392.957 8 256 8zm0 110c23.196 0 42 18.804 42 42s-18.804 42-42 42-42-18.804-42-42 18.804-42 42-42zm56 254c0 6.627-5.373 12-12 12h-88c-6.627 0-12-5.373-12-12v-24c0-6.627 5.373-12 12-12h12v-64h-12c-6.627 0-12-5.373-12-12v-24c0-6.627 5.373-12 12-12h64c6.627 0 12 5.373 12 12v100h12c6.627 0 12 5.373 12 12v24z"/></svg>Note, only the following modules are available to external users (irrespective of the permissions of such users) and only if permissions are granted:<br>
            Users &amp; Groups, Members, Third Parties, Sales Orders, Invoices, Vendors, Projects or Leads, Events/Agenda, Resources, Tags/Categories, Vendor Commercial<br>
            Proposals, Shipments, Receptions, Contracts/Subscriptions, Interventions, Tickets, Unalterable Logs and Archives
          </p>
        </div>
      </main>
    </div>
  </div>

  <!-- red annotation rectangles drawn over the screenshot -->
  <div class="absolute left-[745px] top-[505px] w-[260px] h-[60px] border-x-[12px] border-y-[13px] border-[#fc3b38] rounded-[6px]"></div>
  <div class="absolute left-[666px] top-[669px] w-[2303px] h-[241px] border-[13px] border-[#fc3b38] rounded-[6px]"></div>
  <div class="absolute left-[2835px] top-[773px] w-[111px] h-[113px] border-[13px] border-[#fc3b38] rounded-[6px]"></div>
  <div class="absolute left-[102px] top-[816px] w-[485px] h-[457px] border-[13px] border-[#fc3b38] rounded-[6px]"></div>
  <div class="absolute left-[102px] top-[952px] w-[318px] h-[62px] border-y-[13px] border-r-[13px] border-l-[15px] border-[#fc3b38] rounded-[6px]"></div>
</div>
</body>
</html>
